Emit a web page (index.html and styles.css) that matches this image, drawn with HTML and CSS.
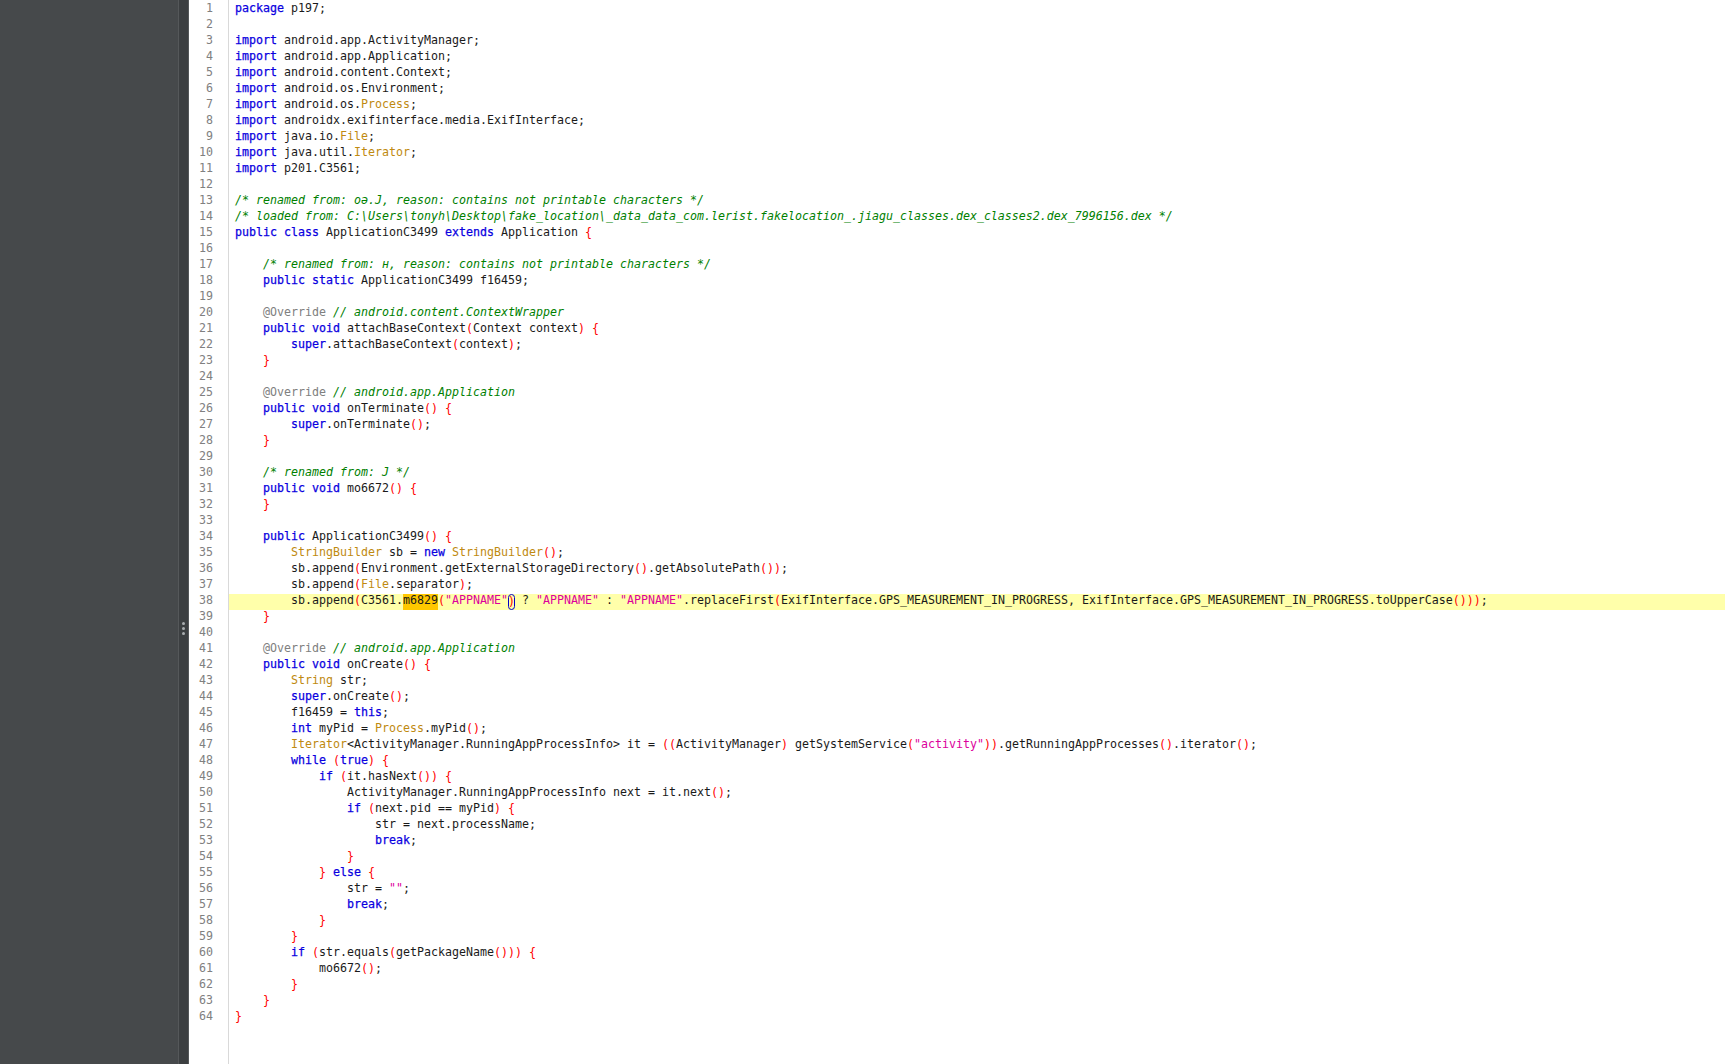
FILE: index.html
```html
<!DOCTYPE html>
<html lang="en">
<head>
<meta charset="utf-8">
<title>ApplicationC3499</title>
<link rel="stylesheet" href="styles.css">
</head>
<body>
<div class="app">
<aside class="side"></aside>
<div class="splitter"><i class="dot"></i><i class="dot"></i><i class="dot"></i></div>
<div class="gutter">
<div class="n">1</div><div class="n">2</div><div class="n">3</div><div class="n">4</div><div class="n">5</div><div class="n">6</div><div class="n">7</div><div class="n">8</div><div class="n">9</div><div class="n">10</div><div class="n">11</div><div class="n">12</div><div class="n">13</div><div class="n">14</div><div class="n">15</div><div class="n">16</div><div class="n">17</div><div class="n">18</div><div class="n">19</div><div class="n">20</div><div class="n">21</div><div class="n">22</div><div class="n">23</div><div class="n">24</div><div class="n">25</div><div class="n">26</div><div class="n">27</div><div class="n">28</div><div class="n">29</div><div class="n">30</div><div class="n">31</div><div class="n">32</div><div class="n">33</div><div class="n">34</div><div class="n">35</div><div class="n">36</div><div class="n">37</div><div class="n">38</div><div class="n">39</div><div class="n">40</div><div class="n">41</div><div class="n">42</div><div class="n">43</div><div class="n">44</div><div class="n">45</div><div class="n">46</div><div class="n">47</div><div class="n">48</div><div class="n">49</div><div class="n">50</div><div class="n">51</div><div class="n">52</div><div class="n">53</div><div class="n">54</div><div class="n">55</div><div class="n">56</div><div class="n">57</div><div class="n">58</div><div class="n">59</div><div class="n">60</div><div class="n">61</div><div class="n">62</div><div class="n">63</div><div class="n">64</div>
</div>
<main class="code">
<div class="l"><b>package</b> p197;</div>
<div class="l"></div>
<div class="l"><b>import</b> android.app.ActivityManager;</div>
<div class="l"><b>import</b> android.app.Application;</div>
<div class="l"><b>import</b> android.content.Context;</div>
<div class="l"><b>import</b> android.os.Environment;</div>
<div class="l"><b>import</b> android.os.<u>Process</u>;</div>
<div class="l"><b>import</b> androidx.exifinterface.media.ExifInterface;</div>
<div class="l"><b>import</b> java.io.<u>File</u>;</div>
<div class="l"><b>import</b> java.util.<u>Iterator</u>;</div>
<div class="l"><b>import</b> p201.C3561;</div>
<div class="l"></div>
<div class="l"><em>/* renamed from: oә.J, reason: contains not printable characters */</em></div>
<div class="l"><em>/* loaded from: C:\Users\tonyh\Desktop\fake_location\_data_data_com.lerist.fakelocation_.jiagu_classes.dex_classes2.dex_7996156.dex */</em></div>
<div class="l"><b>public</b> <b>class</b> ApplicationC3499 <b>extends</b> Application <s>{</s></div>
<div class="l"></div>
<div class="l">    <em>/* renamed from: н, reason: contains not printable characters */</em></div>
<div class="l">    <b>public</b> <b>static</b> ApplicationC3499 f16459;</div>
<div class="l"></div>
<div class="l">    <var>@Override</var> <em>// android.content.ContextWrapper</em></div>
<div class="l">    <b>public</b> <b>void</b> attachBaseContext<s>(</s>Context context<s>)</s> <s>{</s></div>
<div class="l">        <b>super</b>.attachBaseContext<s>(</s>context<s>)</s>;</div>
<div class="l">    <s>}</s></div>
<div class="l"></div>
<div class="l">    <var>@Override</var> <em>// android.app.Application</em></div>
<div class="l">    <b>public</b> <b>void</b> onTerminate<s>()</s> <s>{</s></div>
<div class="l">        <b>super</b>.onTerminate<s>()</s>;</div>
<div class="l">    <s>}</s></div>
<div class="l"></div>
<div class="l">    <em>/* renamed from: J */</em></div>
<div class="l">    <b>public</b> <b>void</b> mo6672<s>()</s> <s>{</s></div>
<div class="l">    <s>}</s></div>
<div class="l"></div>
<div class="l">    <b>public</b> ApplicationC3499<s>()</s> <s>{</s></div>
<div class="l">        <u>StringBuilder</u> sb = <b>new</b> <u>StringBuilder</u><s>()</s>;</div>
<div class="l">        sb.append<s>(</s>Environment.getExternalStorageDirectory<s>()</s>.getAbsolutePath<s>())</s>;</div>
<div class="l">        sb.append<s>(</s><u>File</u>.separator<s>)</s>;</div>
<div class="l cur">        sb.append<s>(</s>C3561.<mark>m6829</mark><s>(</s><q>"APPNAME"</q><s class="match">)</s> ? <q>"APPNAME"</q> : <q>"APPNAME"</q>.replaceFirst<s>(</s>ExifInterface.GPS_MEASUREMENT_IN_PROGRESS, ExifInterface.GPS_MEASUREMENT_IN_PROGRESS.toUpperCase<s>()))</s>;</div>
<div class="l">    <s>}</s></div>
<div class="l"></div>
<div class="l">    <var>@Override</var> <em>// android.app.Application</em></div>
<div class="l">    <b>public</b> <b>void</b> onCreate<s>()</s> <s>{</s></div>
<div class="l">        <u>String</u> str;</div>
<div class="l">        <b>super</b>.onCreate<s>()</s>;</div>
<div class="l">        f16459 = <b>this</b>;</div>
<div class="l">        <b>int</b> myPid = <u>Process</u>.myPid<s>()</s>;</div>
<div class="l">        <u>Iterator</u>&lt;ActivityManager.RunningAppProcessInfo&gt; it = <s>((</s>ActivityManager<s>)</s> getSystemService<s>(</s><q>"activity"</q><s>))</s>.getRunningAppProcesses<s>()</s>.iterator<s>()</s>;</div>
<div class="l">        <b>while</b> <s>(</s><b>true</b><s>)</s> <s>{</s></div>
<div class="l">            <b>if</b> <s>(</s>it.hasNext<s>())</s> <s>{</s></div>
<div class="l">                ActivityManager.RunningAppProcessInfo next = it.next<s>()</s>;</div>
<div class="l">                <b>if</b> <s>(</s>next.pid == myPid<s>)</s> <s>{</s></div>
<div class="l">                    str = next.processName;</div>
<div class="l">                    <b>break</b>;</div>
<div class="l">                <s>}</s></div>
<div class="l">            <s>}</s> <b>else</b> <s>{</s></div>
<div class="l">                str = <q>""</q>;</div>
<div class="l">                <b>break</b>;</div>
<div class="l">            <s>}</s></div>
<div class="l">        <s>}</s></div>
<div class="l">        <b>if</b> <s>(</s>str.equals<s>(</s>getPackageName<s>()))</s> <s>{</s></div>
<div class="l">            mo6672<s>()</s>;</div>
<div class="l">        <s>}</s></div>
<div class="l">    <s>}</s></div>
<div class="l"><s>}</s></div>
</main>
</div>
</body>
</html>
```
FILE: styles.css
```css
html, body { margin: 0; height: 100%; background: #fff; overflow: hidden; }
.app { display: flex; height: 1064px; font-family: "DejaVu Sans Mono", "Liberation Mono", monospace; font-size: 11.64px; color: #1a1a1a; }
.side { width: 178px; flex: none; background: #46494b; border-right: 1px solid #55585a; }
.splitter { width: 9px; flex: none; background: #3c3f41; border-right: 1px solid #55585a; display: flex; flex-direction: column; align-items: center; justify-content: center; gap: 2px; padding-top: 192px; height: 872px; }
.dot { width: 3px; height: 3px; border-radius: 50%; background: #a9adaf; }
.gutter { width: 24px; flex: none; padding: 2px 15px 0 0; color: #808080; text-align: right; border-right: 1px solid #d9d9d9; }
.n { height: 16px; line-height: 12px; }
.code { flex: 1; min-width: 0; padding-top: 2px; }
.l { height: 16px; line-height: 12px; padding-left: 6px; white-space: pre; }
.cur { background: #ffffaa; }
b { color: #0a00e0; font-weight: 400; -webkit-text-stroke: 0.25px #0a00e0; }
u { color: #c08a10; text-decoration: none; }
s { color: #ff0000; text-decoration: none; }
q { color: #dc009c; quotes: none; }
em { color: #008000; font-style: italic; }
var { color: #808080; font-style: normal; }
mark { background: #ffc800; color: inherit; display: inline-block; height: 16px; }
.match { display: inline-block; width: 1ch; height: 16px; line-height: 12px; box-sizing: border-box; border: 1px solid #0000c8; border-radius: 4px; margin-bottom: -4px; vertical-align: top; text-indent: -1px; }
```
